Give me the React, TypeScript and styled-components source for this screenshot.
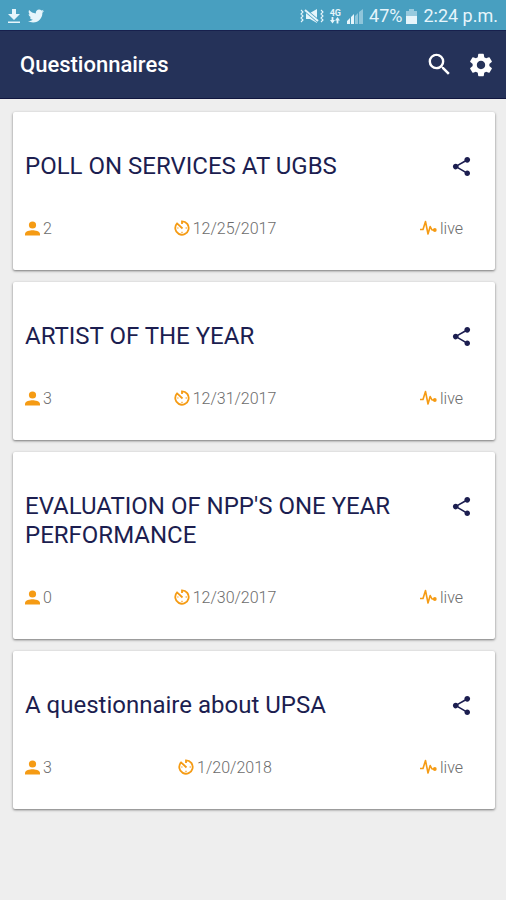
import React from "react";
import styled, { createGlobalStyle } from "styled-components";
import { MdSearch, MdSettings, MdShare } from "react-icons/md";
import { FaTwitter } from "react-icons/fa";

const GlobalStyle = createGlobalStyle`
  * { box-sizing: border-box; }
  body {
    margin: 0;
    background: #eeeeee;
    font-family: Roboto, "Noto Sans", sans-serif;
  }
`;

const Screen = styled.div`
  min-height: 100vh;
  background: #eeeeee;
`;

const StatusBar = styled.div`
  display: flex;
  align-items: center;
  justify-content: space-between;
  height: 30px;
  padding: 2px 8px 0;
  background: #489fc0;
  color: #e6f5fb;
`;

const StatusGroup = styled.div<{ $gap: number }>`
  display: flex;
  align-items: center;
  gap: ${({ $gap }) => $gap}px;
  font-size: 18px;
  line-height: 24px;
  white-space: nowrap;
`;

const AppBar = styled.header`
  display: flex;
  align-items: center;
  justify-content: space-between;
  height: 69px;
  padding: 0 11px 0 20px;
  background: #253259;
  border-top: 1px solid #17204d;
  border-bottom: 1px solid #10163f;
  color: #ffffff;
`;

const Heading = styled.h1`
  margin: 0;
  font-size: 22px;
  line-height: 28px;
  font-weight: 500;
`;

const Actions = styled.div`
  display: flex;
  gap: 13px;
`;

const IconButton = styled.button`
  display: flex;
  align-items: center;
  justify-content: center;
  flex: none;
  padding: 0;
  border: 0;
  background: none;
  color: inherit;
  cursor: pointer;
`;

const List = styled.main`
  display: flex;
  flex-direction: column;
  gap: 12px;
  padding: 13px 11px 12px 13px;
`;

const Card = styled.article`
  padding: 40px 12px 29px;
  background: #ffffff;
  border-radius: 2px;
  box-shadow: 0 1px 3px rgba(0, 0, 0, 0.3), 0 1px 2px rgba(0, 0, 0, 0.25);
`;

const CardTop = styled.div`
  display: flex;
  align-items: flex-start;
  justify-content: space-between;
  gap: 40px;
  padding-right: 10px;
  color: #1c1e50;
`;

const CardTitle = styled.h2`
  margin: 0;
  font-size: 24px;
  line-height: 29px;
  font-weight: 400;
`;

const ShareButton = styled(IconButton)`
  height: 29px;
`;

const Stats = styled.div`
  display: grid;
  grid-template-columns: 1fr 2fr 1fr 38px;
  margin-top: 36px;
  padding-right: 20px;
`;

const Stat = styled.div<{ $align?: string; $column?: string }>`
  display: flex;
  align-items: center;
  justify-content: ${({ $align = "flex-start" }) => $align};
  grid-column: ${({ $column = "auto" }) => $column};
  gap: 3px;
  font-size: 16px;
  line-height: 24px;
  font-weight: 300;
  color: #6c6c6c;

  svg {
    flex: none;
    margin-bottom: 2px;
    color: #f59b14;
  }
`;

const DownloadIcon = () => (
  <svg width="12" height="15" viewBox="0 0 12 15" fill="currentColor" aria-hidden="true">
    <path d="M4 0h4v5h4L6 11 0 5h4zM0 12.5h12v1.6H0z" />
  </svg>
);

const VibrateIcon = () => (
  <svg width="24" height="16" viewBox="0 0 24 16" fill="none" aria-hidden="true">
    <path d="M6 5h4l7-4v14l-7-4H6z" fill="currentColor" />
    <path d="M5 2l13 11" stroke="#489fc0" strokeWidth="3.6" />
    <path d="M5 2l13 11" stroke="currentColor" strokeWidth="2" />
    <path
      d="M1 2l2 2-2 2 2 2-2 2 2 2-2 2M21 2l2 2-2 2 2 2-2 2 2 2-2 2"
      stroke="currentColor"
      strokeWidth="1.1"
    />
  </svg>
);

const NetworkMark = styled.span`
  display: flex;
  flex-direction: column;
  align-items: center;
  font-size: 9px;
  line-height: 8px;
  font-weight: 700;
`;

const DataArrows = () => (
  <svg width="10" height="7" viewBox="0 0 10 7" fill="currentColor" aria-hidden="true">
    <path d="M1.6 0h1.8v3H5L2.5 6.5 0 3h1.6zM6.6 6.5h1.8v-3H10L7.5 0 5 3.5h1.6z" />
  </svg>
);

const SignalIcon = () => (
  <svg width="16" height="15" viewBox="0 0 16 15" fill="currentColor" aria-hidden="true">
    <path d="M0 15v-3l3-3v6zM4 15V8l3-3v10z" />
    <path d="M8 15V7l3-3v11zM12 15V3l4-3v15z" opacity=".45" />
  </svg>
);

const BatteryIcon = () => (
  <svg width="11" height="15" viewBox="0 0 11 15" fill="currentColor" aria-hidden="true">
    <path d="M3 0h5v2h3v6H0V2h3z" opacity=".5" />
    <path d="M0 7h11v8H0z" />
  </svg>
);

const PersonIcon = () => (
  <svg width="15" height="15" viewBox="0 0 15 15" fill="currentColor" aria-hidden="true">
    <circle cx="7.5" cy="4" r="3.6" />
    <path d="M0 14.5v-1.7C0 10.3 5 9.3 7.5 9.3s7.5 1 7.5 3.5v1.7z" />
  </svg>
);

const TimerIcon = () => (
  <svg
    width="16"
    height="16"
    viewBox="0 0 16 16"
    fill="none"
    stroke="currentColor"
    strokeWidth="1.8"
    aria-hidden="true"
  >
    <path d="M8 4V1.3a6.7 6.7 0 1 1-4.9 2.1L8.5 8.5" />
    <path d="M11.5 8h1.5M8 11.7v1.3M3.2 8h1.3" strokeWidth="1.2" />
  </svg>
);

const PulseIcon = () => (
  <svg
    width="17"
    height="16"
    viewBox="0 0 17 16"
    fill="none"
    stroke="currentColor"
    strokeWidth="1.6"
    strokeLinejoin="round"
    aria-hidden="true"
  >
    <path d="M0 9.5h3L5.5 1.5 8 14l2.2-7.5L12 10h3" />
    <circle cx="14.8" cy="10" r="1.9" fill="currentColor" stroke="none" />
  </svg>
);

const questionnaires = [
  { title: "POLL ON SERVICES AT UGBS", people: 2, date: "12/25/2017" },
  { title: "ARTIST OF THE YEAR", people: 3, date: "12/31/2017" },
  { title: "EVALUATION OF NPP'S ONE YEAR PERFORMANCE", people: 0, date: "12/30/2017" },
  { title: "A questionnaire about UPSA", people: 3, date: "1/20/2018" },
];

export default function App() {
  return (
    <Screen>
      <GlobalStyle />
      <StatusBar>
        <StatusGroup $gap={8}>
          <DownloadIcon />
          <FaTwitter size={16} />
        </StatusGroup>
        <StatusGroup $gap={6}>
          <VibrateIcon />
          <StatusGroup $gap={6}>
            <NetworkMark>
              4G
              <DataArrows />
            </NetworkMark>
            <SignalIcon />
          </StatusGroup>
          <StatusGroup $gap={4}>
            <span>47%</span>
            <BatteryIcon />
          </StatusGroup>
          <span>2:24 p.m.</span>
        </StatusGroup>
      </StatusBar>
      <AppBar>
        <Heading>Questionnaires</Heading>
        <Actions>
          <IconButton type="button" aria-label="Search">
            <MdSearch size={29} />
          </IconButton>
          <IconButton type="button" aria-label="Settings">
            <MdSettings size={28} />
          </IconButton>
        </Actions>
      </AppBar>
      <List>
        {questionnaires.map((item) => (
          <Card key={item.title}>
            <CardTop>
              <CardTitle>{item.title}</CardTitle>
              <ShareButton type="button" aria-label={`Share ${item.title}`}>
                <MdShare size={23} />
              </ShareButton>
            </CardTop>
            <Stats>
              <Stat>
                <PersonIcon />
                {item.people}
              </Stat>
              <Stat $align="center">
                <TimerIcon />
                {item.date}
              </Stat>
              <Stat $align="flex-end" $column="3 / 5">
                <PulseIcon />
                live
              </Stat>
            </Stats>
          </Card>
        ))}
      </List>
    </Screen>
  );
}
